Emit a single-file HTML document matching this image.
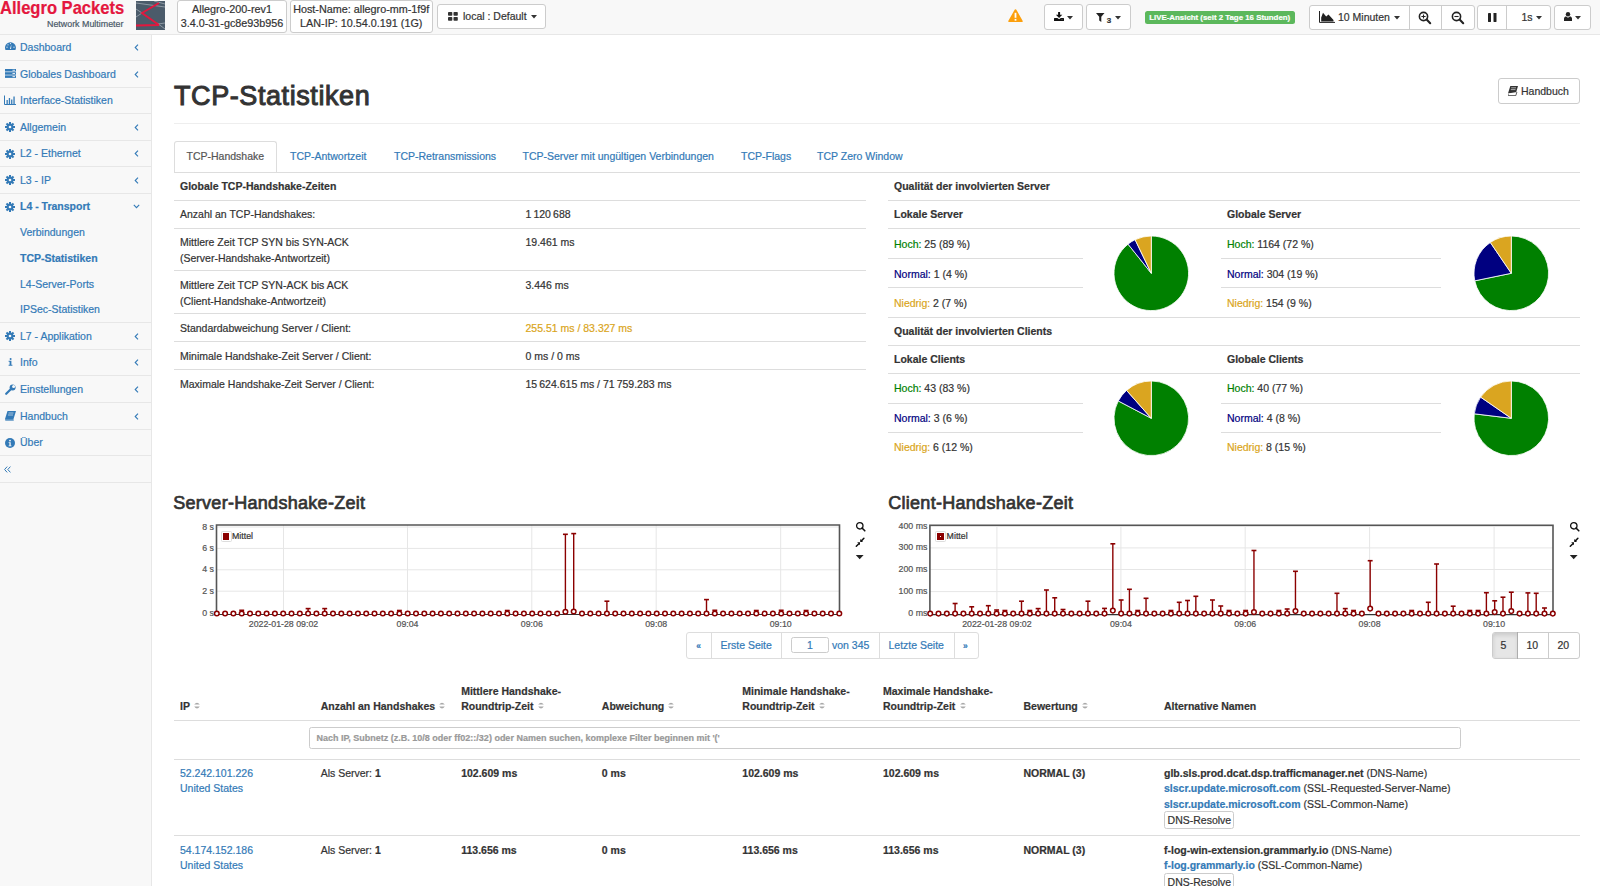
<!DOCTYPE html><html><head><meta charset="utf-8"><title>TCP-Statistiken</title><style>
*{box-sizing:border-box}
html,body{margin:0;padding:0}
body{width:1600px;height:886px;overflow:hidden;position:relative;background:#fff;font-family:"Liberation Sans",sans-serif;font-size:10.5px;line-height:15px;color:#333;-webkit-text-stroke:0.2px}
.a{position:absolute}
a{color:#337ab7;text-decoration:none}
svg{display:block}
#hdr{left:0;top:0;width:1600px;height:35px;background:#f8f8f8;border-bottom:1px solid #e7e7e7}
.hbox{background:#fff;border:1px solid #ccc;border-radius:3px;text-align:center;white-space:nowrap;line-height:14px;font-size:10.8px}
.btn{background:#fff;border:1px solid #ccc;border-radius:3px;white-space:nowrap;color:#333}
#side{left:0;top:35px;width:152px;height:851px;background:#f8f8f8;border-right:1px solid #e7e7e7}
#side ul{list-style:none;margin:0;padding:0}
#side li.it{border-bottom:1px solid #e7e7e7;height:26.67px;position:relative}
#side li.it>a{position:absolute;left:20px;top:0;line-height:25.67px;white-space:nowrap}
#side .ic{position:absolute;left:5px;top:7px}
#side .ch{position:absolute;left:134px;top:9px}
#side .sub{position:absolute;left:20px;white-space:nowrap}
.tbl{border-collapse:separate;border-spacing:0;width:100%}
.tbl td,.tbl th{padding:6px;vertical-align:top;text-align:left;border-top:1px solid #ddd;line-height:15px}
.tbl tr:first-child>td,.tbl tr:first-child>th{border-top:0}
b,th{font-weight:700}
.hoch{color:#008000}.normal{color:#000080}.niedrig{color:#daa520}
</style></head><body><div id="hdr" class="a"></div><div class="a" style="left:-0.5px;top:-2px;font-size:17.9px;font-weight:700;color:#e4173e;line-height:20px;white-space:nowrap;transform:scaleX(0.925);transform-origin:0 0">Allegro Packets</div><div class="a" style="left:47px;top:18px;font-size:8.9px;color:#4a5968;line-height:12px;white-space:nowrap">Network Multimeter</div><svg class="a" style="left:136px;top:1px" width="30" height="29" viewBox="0 0 30 29">
<rect x="0" y="0" width="29" height="29" fill="#4b5b6a"/>
<path d="M0 2 L29 6 M0 8 L6 12 L0 16 M21 22 L29 28 M22 23 L29 22 M18 0 L29 3" stroke="#a9b3bc" stroke-width="0.7" fill="none"/>
<path d="M23 2 L6 12 L23 24 M0 24.5 L23 24" stroke="#e4173e" stroke-width="1.9" fill="none"/>
</svg><div class="a hbox" style="left:177px;top:0px;width:110px;height:33px;padding-top:1px">Allegro-200-rev1<br>3.4.0-31-gc8e93b956</div><div class="a hbox" style="left:289.5px;top:0px;width:143.5px;height:33px;padding-top:1px">Host-Name: allegro-mm-1f9f<br>LAN-IP: 10.54.0.191 (1G)</div><div class="a btn" style="left:436.5px;top:3.5px;width:109.5px;height:25.75px"></div><svg class="a" style="left:448px;top:12px" width="10" height="9" viewBox="0 0 10 9"><rect x="0" y="0" width="4.3" height="3.8" rx="0.8" fill="#333"/><rect x="5.5" y="0" width="4.3" height="3.8" rx="0.8" fill="#333"/><rect x="0" y="5" width="4.3" height="3.8" rx="0.8" fill="#333"/><rect x="5.5" y="5" width="4.3" height="3.8" rx="0.8" fill="#333"/></svg><div class="a" style="left:463px;top:9px;white-space:nowrap">local : Default</div><svg class="a" style="left:530.5px;top:15px" width="6.0" height="3.5" viewBox="0 0 6 3.5"><path d="M0 0 L6 0 L3 3.5Z" fill="#333"/></svg><svg class="a" style="left:1008px;top:8.5px" width="15" height="13.5" viewBox="0 0 15 13.5"><path d="M7.5 0.3 C8 0.3 8.3 0.6 8.5 1 L14.6 11.8 C14.9 12.4 14.6 13.2 13.8 13.2 L1.2 13.2 C0.4 13.2 0.1 12.4 0.4 11.8 L6.5 1 C6.7 0.6 7 0.3 7.5 0.3Z" fill="#fc9f0c"/><rect x="6.6" y="3.8" width="1.8" height="5" fill="#fff"/><rect x="6.6" y="9.9" width="1.8" height="1.8" fill="#fff"/></svg><div class="a btn" style="left:1044px;top:4px;width:38.5px;height:25.5px"></div><svg class="a" style="left:1054px;top:11.9px" width="10" height="9" viewBox="0 0 10 9"><rect x="4.1" y="0" width="2" height="3" rx="0.3" fill="#111"/><path d="M1.9 2.7 H8.3 L5.1 5.9Z" fill="#111"/><path d="M0 6.5 Q0 5.9 0.6 5.9 H3.4 L5.1 7.3 L6.8 5.9 H9.4 Q10 5.9 10 6.5 V8.4 Q10 8.9 9.5 8.9 H0.5 Q0 8.9 0 8.4Z" fill="#111"/><rect x="7.6" y="7.2" width="0.8" height="0.8" fill="#888"/></svg><svg class="a" style="left:1067px;top:16px" width="6.0" height="3.5" viewBox="0 0 6 3.5"><path d="M0 0 L6 0 L3 3.5Z" fill="#333"/></svg><div class="a btn" style="left:1086px;top:4px;width:45px;height:25.5px"></div><svg class="a" style="left:1096px;top:12.5px" width="8.5" height="9" viewBox="0 0 8.5 9"><path d="M0 0 H8.5 L5.3 3.8 V9 L3.2 7.6 V3.8Z" fill="#222"/></svg><div class="a" style="left:1106.8px;top:14.5px;font-size:8px;line-height:12px;font-weight:700;color:#333">3</div><svg class="a" style="left:1114.5px;top:16px" width="6.0" height="3.5" viewBox="0 0 6 3.5"><path d="M0 0 L6 0 L3 3.5Z" fill="#333"/></svg><div class="a" style="left:1144.5px;top:10.5px;width:150.5px;height:13.75px;background:#5cb85c;border-radius:2.5px;color:#fff;font-weight:700;font-size:7.875px;line-height:13.75px;text-align:center;white-space:nowrap">LIVE-Ansicht (seit 2 Tage 16 Stunden)</div><div class="a btn" style="left:1309px;top:4.5px;width:165.5px;height:25px"></div><div class="a" style="left:1408.5px;top:4.5px;width:1px;height:25px;background:#ccc"></div><div class="a" style="left:1441px;top:4.5px;width:1px;height:25px;background:#ccc"></div><svg class="a" style="left:1319px;top:11.2px" width="16" height="12" viewBox="0 0 16 12"><path d="M0.5 0 V11.4 H16" stroke="#222" stroke-width="1" fill="none"/><path d="M2.2 10.5 V6.5 L4 1.8 L7.2 5.5 L9.5 3.6 L14.5 9 V10.5Z" fill="#222"/></svg><div class="a" style="left:1338px;top:9.5px;white-space:nowrap">10 Minuten</div><svg class="a" style="left:1394px;top:16px" width="6.0" height="3.5" viewBox="0 0 6 3.5"><path d="M0 0 L6 0 L3 3.5Z" fill="#333"/></svg><svg class="a" style="left:1417.8px;top:11.4px" width="14" height="14" viewBox="0 0 14 14"><circle cx="5.5" cy="5.5" r="4.1" stroke="#222" stroke-width="1.6" fill="none"/><path d="M8.6 8.6 L12.2 12.2" stroke="#222" stroke-width="2.1" stroke-linecap="round"/><path d="M3.4 5.5 H7.6 M5.5 3.4 V7.6" stroke="#222" stroke-width="1.1"/></svg><svg class="a" style="left:1450.7px;top:11.4px" width="14" height="14" viewBox="0 0 14 14"><circle cx="5.5" cy="5.5" r="4.1" stroke="#222" stroke-width="1.6" fill="none"/><path d="M8.6 8.6 L12.2 12.2" stroke="#222" stroke-width="2.1" stroke-linecap="round"/><path d="M3.4 5.5 H7.6" stroke="#222" stroke-width="1.1"/></svg><div class="a btn" style="left:1477px;top:4.5px;width:74px;height:25px"></div><div class="a" style="left:1506px;top:4.5px;width:1px;height:25px;background:#ccc"></div><svg class="a" style="left:1488px;top:12.5px" width="9" height="9" viewBox="0 0 9 9"><rect x="0" y="0" width="3" height="9" rx="0.4" fill="#222"/><rect x="5.5" y="0" width="3" height="9" rx="0.4" fill="#222"/></svg><div class="a" style="left:1521.5px;top:9.5px;white-space:nowrap">1s</div><svg class="a" style="left:1535.5px;top:16px" width="6.0" height="3.5" viewBox="0 0 6 3.5"><path d="M0 0 L6 0 L3 3.5Z" fill="#333"/></svg><div class="a btn" style="left:1554px;top:4.5px;width:36.5px;height:25px"></div><svg class="a" style="left:1564px;top:12px" width="8" height="9" viewBox="0 0 8 9"><circle cx="4" cy="2.2" r="2.2" fill="#222"/><path d="M0 9 V6.5 C0 5 1.2 4.4 2.2 4.4 L4 5.8 L5.8 4.4 C6.8 4.4 8 5 8 6.5 V9Z" fill="#222"/></svg><svg class="a" style="left:1575px;top:16px" width="6.0" height="3.5" viewBox="0 0 6 3.5"><path d="M0 0 L6 0 L3 3.5Z" fill="#333"/></svg><div id="side" class="a"></div><div class="a" style="left:0;top:60.00px;width:151px;height:1px;background:#e7e7e7"></div><svg class="a" style="left:5px;top:41.5px" width="11" height="9" viewBox="0 0 11 9"><path d="M0.49 8 A5.45 5.45 0 1 1 10.41 8Z" fill="#337ab7"/><path d="M5 7 L6.3 2.2 L6.1 7Z" fill="#f8f8f8"/><circle cx="2" cy="5.2" r="0.6" fill="#f8f8f8"/><circle cx="3" cy="2.8" r="0.6" fill="#f8f8f8"/><circle cx="5.5" cy="1.6" r="0.6" fill="#f8f8f8"/><circle cx="9" cy="5.2" r="0.6" fill="#f8f8f8"/></svg><div class="a" style="left:20px;top:40.00px;white-space:nowrap;color:#337ab7;">Dashboard</div><svg class="a" style="left:134.2px;top:44.0px" width="5" height="7" viewBox="0 0 5 7"><path d="M4 0.6 L1.2 3.5 L4 6.4" stroke="#337ab7" stroke-width="1.1" fill="none"/></svg><div class="a" style="left:0;top:87.00px;width:151px;height:1px;background:#e7e7e7"></div><svg class="a" style="left:5px;top:69.0px" width="11" height="9" viewBox="0 0 11 9"><rect x="0" y="0" width="11" height="2.5" fill="#337ab7"/><rect x="0" y="3.2" width="11" height="2.5" fill="#337ab7"/><rect x="0" y="6.4" width="11" height="2.5" fill="#337ab7"/><rect x="7.5" y="0.8" width="2.5" height="0.9" fill="#f8f8f8"/><rect x="7.5" y="4" width="2.5" height="0.9" fill="#f8f8f8"/><rect x="7.5" y="7.2" width="2.5" height="0.9" fill="#f8f8f8"/></svg><div class="a" style="left:20px;top:66.50px;white-space:nowrap;color:#337ab7;">Globales Dashboard</div><svg class="a" style="left:134.2px;top:70.5px" width="5" height="7" viewBox="0 0 5 7"><path d="M4 0.6 L1.2 3.5 L4 6.4" stroke="#337ab7" stroke-width="1.1" fill="none"/></svg><div class="a" style="left:0;top:113.00px;width:151px;height:1px;background:#e7e7e7"></div><svg class="a" style="left:4.3px;top:95.0px" width="12" height="10" viewBox="0 0 12 10"><path d="M0.5 0.5 V9.5 H12" stroke="#337ab7" stroke-width="1" fill="none"/><rect x="2.5" y="5" width="1.3" height="4" fill="#337ab7"/><rect x="4.8" y="3" width="1.3" height="6" fill="#337ab7"/><rect x="7.1" y="4.5" width="1.3" height="4.5" fill="#337ab7"/><rect x="9.4" y="1.5" width="1.3" height="7.5" fill="#337ab7"/></svg><div class="a" style="left:20px;top:93.00px;white-space:nowrap;color:#337ab7;">Interface-Statistiken</div><div class="a" style="left:0;top:140.00px;width:151px;height:1px;background:#e7e7e7"></div><svg class="a" style="left:5px;top:122.0px" width="10" height="10" viewBox="0 0 10 10"><rect x="4" y="0" width="2" height="2.6" transform="rotate(0 5 5)" fill="#337ab7"/><rect x="4" y="0" width="2" height="2.6" transform="rotate(45 5 5)" fill="#337ab7"/><rect x="4" y="0" width="2" height="2.6" transform="rotate(90 5 5)" fill="#337ab7"/><rect x="4" y="0" width="2" height="2.6" transform="rotate(135 5 5)" fill="#337ab7"/><rect x="4" y="0" width="2" height="2.6" transform="rotate(180 5 5)" fill="#337ab7"/><rect x="4" y="0" width="2" height="2.6" transform="rotate(225 5 5)" fill="#337ab7"/><rect x="4" y="0" width="2" height="2.6" transform="rotate(270 5 5)" fill="#337ab7"/><rect x="4" y="0" width="2" height="2.6" transform="rotate(315 5 5)" fill="#337ab7"/><circle cx="5" cy="5" r="3.4" fill="#337ab7"/><circle cx="5" cy="5" r="1.3" fill="#f8f8f8"/></svg><div class="a" style="left:20px;top:119.50px;white-space:nowrap;color:#337ab7;">Allgemein</div><svg class="a" style="left:134.2px;top:123.5px" width="5" height="7" viewBox="0 0 5 7"><path d="M4 0.6 L1.2 3.5 L4 6.4" stroke="#337ab7" stroke-width="1.1" fill="none"/></svg><div class="a" style="left:0;top:166.00px;width:151px;height:1px;background:#e7e7e7"></div><svg class="a" style="left:5px;top:148.5px" width="10" height="10" viewBox="0 0 10 10"><rect x="4" y="0" width="2" height="2.6" transform="rotate(0 5 5)" fill="#337ab7"/><rect x="4" y="0" width="2" height="2.6" transform="rotate(45 5 5)" fill="#337ab7"/><rect x="4" y="0" width="2" height="2.6" transform="rotate(90 5 5)" fill="#337ab7"/><rect x="4" y="0" width="2" height="2.6" transform="rotate(135 5 5)" fill="#337ab7"/><rect x="4" y="0" width="2" height="2.6" transform="rotate(180 5 5)" fill="#337ab7"/><rect x="4" y="0" width="2" height="2.6" transform="rotate(225 5 5)" fill="#337ab7"/><rect x="4" y="0" width="2" height="2.6" transform="rotate(270 5 5)" fill="#337ab7"/><rect x="4" y="0" width="2" height="2.6" transform="rotate(315 5 5)" fill="#337ab7"/><circle cx="5" cy="5" r="3.4" fill="#337ab7"/><circle cx="5" cy="5" r="1.3" fill="#f8f8f8"/></svg><div class="a" style="left:20px;top:146.00px;white-space:nowrap;color:#337ab7;">L2 - Ethernet</div><svg class="a" style="left:134.2px;top:150.0px" width="5" height="7" viewBox="0 0 5 7"><path d="M4 0.6 L1.2 3.5 L4 6.4" stroke="#337ab7" stroke-width="1.1" fill="none"/></svg><div class="a" style="left:0;top:193.00px;width:151px;height:1px;background:#e7e7e7"></div><svg class="a" style="left:5px;top:175.0px" width="10" height="10" viewBox="0 0 10 10"><rect x="4" y="0" width="2" height="2.6" transform="rotate(0 5 5)" fill="#337ab7"/><rect x="4" y="0" width="2" height="2.6" transform="rotate(45 5 5)" fill="#337ab7"/><rect x="4" y="0" width="2" height="2.6" transform="rotate(90 5 5)" fill="#337ab7"/><rect x="4" y="0" width="2" height="2.6" transform="rotate(135 5 5)" fill="#337ab7"/><rect x="4" y="0" width="2" height="2.6" transform="rotate(180 5 5)" fill="#337ab7"/><rect x="4" y="0" width="2" height="2.6" transform="rotate(225 5 5)" fill="#337ab7"/><rect x="4" y="0" width="2" height="2.6" transform="rotate(270 5 5)" fill="#337ab7"/><rect x="4" y="0" width="2" height="2.6" transform="rotate(315 5 5)" fill="#337ab7"/><circle cx="5" cy="5" r="3.4" fill="#337ab7"/><circle cx="5" cy="5" r="1.3" fill="#f8f8f8"/></svg><div class="a" style="left:20px;top:172.50px;white-space:nowrap;color:#337ab7;">L3 - IP</div><svg class="a" style="left:134.2px;top:176.5px" width="5" height="7" viewBox="0 0 5 7"><path d="M4 0.6 L1.2 3.5 L4 6.4" stroke="#337ab7" stroke-width="1.1" fill="none"/></svg><svg class="a" style="left:5px;top:201.84px" width="10" height="10" viewBox="0 0 10 10"><rect x="4" y="0" width="2" height="2.6" transform="rotate(0 5 5)" fill="#337ab7"/><rect x="4" y="0" width="2" height="2.6" transform="rotate(45 5 5)" fill="#337ab7"/><rect x="4" y="0" width="2" height="2.6" transform="rotate(90 5 5)" fill="#337ab7"/><rect x="4" y="0" width="2" height="2.6" transform="rotate(135 5 5)" fill="#337ab7"/><rect x="4" y="0" width="2" height="2.6" transform="rotate(180 5 5)" fill="#337ab7"/><rect x="4" y="0" width="2" height="2.6" transform="rotate(225 5 5)" fill="#337ab7"/><rect x="4" y="0" width="2" height="2.6" transform="rotate(270 5 5)" fill="#337ab7"/><rect x="4" y="0" width="2" height="2.6" transform="rotate(315 5 5)" fill="#337ab7"/><circle cx="5" cy="5" r="3.4" fill="#337ab7"/><circle cx="5" cy="5" r="1.3" fill="#f8f8f8"/></svg><div class="a" style="left:20px;top:199.34px;white-space:nowrap;color:#337ab7;font-weight:700">L4 - Transport</div><svg class="a" style="left:133.2px;top:204.34px" width="7" height="5" viewBox="0 0 7 5"><path d="M0.8 0.8 L3.5 3.6 L6.2 0.8" stroke="#337ab7" stroke-width="1.1" fill="none"/></svg><div class="a" style="left:20px;top:224.70px;white-space:nowrap;color:#337ab7;">Verbindungen</div><div class="a" style="left:20px;top:250.70px;white-space:nowrap;color:#337ab7;font-weight:700;">TCP-Statistiken</div><div class="a" style="left:20px;top:276.50px;white-space:nowrap;color:#337ab7;">L4-Server-Ports</div><div class="a" style="left:20px;top:301.80px;white-space:nowrap;color:#337ab7;">IPSec-Statistiken</div><div class="a" style="left:0;top:322px;width:151px;height:1px;background:#e7e7e7"></div><div class="a" style="left:0;top:349.00px;width:151px;height:1px;background:#e7e7e7"></div><svg class="a" style="left:5px;top:331.0px" width="10" height="10" viewBox="0 0 10 10"><rect x="4" y="0" width="2" height="2.6" transform="rotate(0 5 5)" fill="#337ab7"/><rect x="4" y="0" width="2" height="2.6" transform="rotate(45 5 5)" fill="#337ab7"/><rect x="4" y="0" width="2" height="2.6" transform="rotate(90 5 5)" fill="#337ab7"/><rect x="4" y="0" width="2" height="2.6" transform="rotate(135 5 5)" fill="#337ab7"/><rect x="4" y="0" width="2" height="2.6" transform="rotate(180 5 5)" fill="#337ab7"/><rect x="4" y="0" width="2" height="2.6" transform="rotate(225 5 5)" fill="#337ab7"/><rect x="4" y="0" width="2" height="2.6" transform="rotate(270 5 5)" fill="#337ab7"/><rect x="4" y="0" width="2" height="2.6" transform="rotate(315 5 5)" fill="#337ab7"/><circle cx="5" cy="5" r="3.4" fill="#337ab7"/><circle cx="5" cy="5" r="1.3" fill="#f8f8f8"/></svg><div class="a" style="left:20px;top:328.50px;white-space:nowrap;color:#337ab7;">L7 - Applikation</div><svg class="a" style="left:134.2px;top:332.5px" width="5" height="7" viewBox="0 0 5 7"><path d="M4 0.6 L1.2 3.5 L4 6.4" stroke="#337ab7" stroke-width="1.1" fill="none"/></svg><div class="a" style="left:0;top:375.00px;width:151px;height:1px;background:#e7e7e7"></div><svg class="a" style="left:8.3px;top:358.1px" width="5" height="8" viewBox="0 0 5 8"><circle cx="2.6" cy="1" r="1" fill="#337ab7"/><path d="M0.6 2.7 H3.4 V6.7 H4.4 V7.8 H0.6 V6.7 H1.6 V3.8 H0.6Z" fill="#337ab7"/></svg><div class="a" style="left:20px;top:355.00px;white-space:nowrap;color:#337ab7;">Info</div><svg class="a" style="left:134.2px;top:359.0px" width="5" height="7" viewBox="0 0 5 7"><path d="M4 0.6 L1.2 3.5 L4 6.4" stroke="#337ab7" stroke-width="1.1" fill="none"/></svg><div class="a" style="left:0;top:402.00px;width:151px;height:1px;background:#e7e7e7"></div><svg class="a" style="left:5px;top:384.0px" width="11" height="11" viewBox="0 0 11 11"><path d="M1.2 9.8 L6 5" stroke="#337ab7" stroke-width="2.2" stroke-linecap="round"/><circle cx="7.6" cy="3.4" r="3" fill="#337ab7"/><circle cx="8.6" cy="2.4" r="1.5" fill="#f8f8f8"/></svg><div class="a" style="left:20px;top:381.50px;white-space:nowrap;color:#337ab7;">Einstellungen</div><svg class="a" style="left:134.2px;top:385.5px" width="5" height="7" viewBox="0 0 5 7"><path d="M4 0.6 L1.2 3.5 L4 6.4" stroke="#337ab7" stroke-width="1.1" fill="none"/></svg><div class="a" style="left:0;top:429.00px;width:151px;height:1px;background:#e7e7e7"></div><svg class="a" style="left:5px;top:411.0px" width="11" height="10" viewBox="0 0 11 10"><path d="M2.5 0 H11 L8.5 8 H0Z" fill="#337ab7"/><path d="M0 8 L0.3 9.8 H8.8 L8.5 8" fill="#337ab7" opacity="0.8"/><path d="M3.5 2 H8.5 M3 4 H8" stroke="#f8f8f8" stroke-width="0.6"/></svg><div class="a" style="left:20px;top:408.50px;white-space:nowrap;color:#337ab7;">Handbuch</div><svg class="a" style="left:134.2px;top:412.5px" width="5" height="7" viewBox="0 0 5 7"><path d="M4 0.6 L1.2 3.5 L4 6.4" stroke="#337ab7" stroke-width="1.1" fill="none"/></svg><div class="a" style="left:0;top:455.00px;width:151px;height:1px;background:#e7e7e7"></div><svg class="a" style="left:5px;top:437.5px" width="10" height="10" viewBox="0 0 10 10"><circle cx="5" cy="5" r="5" fill="#337ab7"/><circle cx="5" cy="2.6" r="0.9" fill="#f8f8f8"/><path d="M3.6 4.2 H5.7 V7.4 H6.5 V8.2 H3.6 V7.4 H4.4 V5 H3.6Z" fill="#f8f8f8"/></svg><div class="a" style="left:20px;top:435.00px;white-space:nowrap;color:#337ab7;">Über</div><svg class="a" style="left:4px;top:465.50px" width="7" height="7" viewBox="0 0 7 7"><path d="M3.2 0.6 L0.6 3.5 L3.2 6.4 M6.4 0.6 L3.8 3.5 L6.4 6.4" stroke="#337ab7" stroke-width="1" fill="none"/></svg><div class="a" style="left:0;top:482.00px;width:151px;height:1px;background:#e7e7e7"></div><div class="a" style="left:174px;top:75.5px;font-size:27px;line-height:40px;font-weight:400;-webkit-text-stroke:1px #333;letter-spacing:0.58px;white-space:nowrap">TCP-Statistiken</div><div class="a" style="left:174px;top:123px;width:1406px;height:1px;background:#eee"></div><div class="a btn" style="left:1498px;top:78px;width:82px;height:25.5px"></div><svg class="a" style="left:1508px;top:86px" width="10" height="10" viewBox="0 0 10 10"><path d="M2.3 0 H10 L7.8 7.6 H0Z" fill="#333"/><path d="M0 7.6 L0.2 9.6 H7.8 L8.9 6" stroke="#333" stroke-width="0.8" fill="#fff"/><path d="M3.2 1.8 H8 M2.8 3.6 H7.5" stroke="#fff" stroke-width="0.6"/></svg><div class="a" style="left:1521px;top:83.5px;white-space:nowrap">Handbuch</div><div class="a" style="left:174px;top:140.5px;width:102.5px;height:32px;border:1px solid #ddd;border-bottom:0;border-radius:3px 3px 0 0;background:#fff"></div><div class="a" style="left:174px;top:171.5px;width:1406px;height:1px;background:#ddd"></div><div class="a" style="left:186.5px;top:148.5px;white-space:nowrap;color:#555">TCP-Handshake</div><div class="a" style="left:290px;top:148.5px;white-space:nowrap;color:#337ab7">TCP-Antwortzeit</div><div class="a" style="left:394px;top:148.5px;white-space:nowrap;color:#337ab7">TCP-Retransmissions</div><div class="a" style="left:522.5px;top:148.5px;white-space:nowrap;color:#337ab7">TCP-Server mit ungültigen Verbindungen</div><div class="a" style="left:741px;top:148.5px;white-space:nowrap;color:#337ab7">TCP-Flags</div><div class="a" style="left:817px;top:148.5px;white-space:nowrap;color:#337ab7">TCP Zero Window</div><div class="a" style="left:174px;top:172.5px;width:692px"><table class="tbl"><tr><th colspan="2">Globale TCP-Handshake-Zeiten</th></tr><tr><td style="width:345.5px;">Anzahl an TCP-Handshakes:</td><td style="">1&#8201;120&#8201;688</td></tr><tr><td style="width:345.5px;padding-top:6.5px;padding-bottom:4.3px;line-height:15.6px;">Mittlere Zeit TCP SYN bis SYN-ACK<br>(Server-Handshake-Antwortzeit)</td><td style="padding-top:6.5px;padding-bottom:4.3px;line-height:15.6px;">19.461 ms</td></tr><tr><td style="width:345.5px;padding-top:6.5px;padding-bottom:4.3px;line-height:15.6px;">Mittlere Zeit TCP SYN-ACK bis ACK<br>(Client-Handshake-Antwortzeit)</td><td style="padding-top:6.5px;padding-bottom:4.3px;line-height:15.6px;">3.446 ms</td></tr><tr><td style="width:345.5px;padding-top:7px;padding-bottom:5px;">Standardabweichung Server / Client:</td><td style="padding-top:7px;padding-bottom:5px;"><span style="color:#daa520">255.51 ms / 83.327 ms</span></td></tr><tr><td style="width:345.5px;padding-top:7px;padding-bottom:5px;">Minimale Handshake-Zeit Server / Client:</td><td style="padding-top:7px;padding-bottom:5px;">0 ms / 0 ms</td></tr><tr><td style="width:345.5px;padding-top:7px;padding-bottom:5px;">Maximale Handshake-Zeit Server / Client:</td><td style="padding-top:7px;padding-bottom:5px;">15&#8201;624.615 ms / 71&#8201;759.283 ms</td></tr></table></div><div class="a" style="left:894px;top:178.50px;font-weight:700;white-space:nowrap">Qualität der involvierten Server</div><div class="a" style="left:888px;top:199.50px;width:692px;height:1px;background:#ddd"></div><div class="a" style="left:894px;top:206.50px;font-weight:700;white-space:nowrap">Lokale Server</div><div class="a" style="left:1227px;top:206.50px;font-weight:700;white-space:nowrap">Globale Server</div><div class="a" style="left:888px;top:227.50px;width:692px;height:1px;background:#ddd"></div><div class="a" style="left:894px;top:237.00px;white-space:nowrap"><span class="hoch">Hoch:</span> 25 (89 %)</div><div class="a" style="left:888px;top:257.90px;width:194.5px;height:1px;background:#ddd"></div><div class="a" style="left:894px;top:266.50px;white-space:nowrap"><span class="normal">Normal:</span> 1 (4 %)</div><div class="a" style="left:888px;top:286.90px;width:194.5px;height:1px;background:#ddd"></div><div class="a" style="left:894px;top:295.60px;white-space:nowrap"><span class="niedrig">Niedrig:</span> 2 (7 %)</div><div class="a" style="left:1227px;top:237.00px;white-space:nowrap"><span class="hoch">Hoch:</span> 1164 (72 %)</div><div class="a" style="left:1221px;top:257.90px;width:220px;height:1px;background:#ddd"></div><div class="a" style="left:1227px;top:266.50px;white-space:nowrap"><span class="normal">Normal:</span> 304 (19 %)</div><div class="a" style="left:1221px;top:286.90px;width:220px;height:1px;background:#ddd"></div><div class="a" style="left:1227px;top:295.60px;white-space:nowrap"><span class="niedrig">Niedrig:</span> 154 (9 %)</div><svg class="a" style="left:1113.00px;top:234.50px" width="76.6" height="76.6" viewBox="-38.3 -38.3 76.6 76.6"><path d="M0 0 L0.000 -37.300 A37.3 37.3 0 1 1 -23.256 -29.162Z" fill="#008000" stroke="#fff" stroke-width="0.8" stroke-linejoin="round"/><path d="M0 0 L-23.256 -29.162 A37.3 37.3 0 0 1 -16.184 -33.606Z" fill="#000080" stroke="#fff" stroke-width="0.8" stroke-linejoin="round"/><path d="M0 0 L-16.184 -33.606 A37.3 37.3 0 0 1 -0.000 -37.300Z" fill="#daa520" stroke="#fff" stroke-width="0.8" stroke-linejoin="round"/></svg><svg class="a" style="left:1472.50px;top:234.50px" width="76.6" height="76.6" viewBox="-38.3 -38.3 76.6 76.6"><path d="M0 0 L0.000 -37.300 A37.3 37.3 0 1 1 -36.531 7.534Z" fill="#008000" stroke="#fff" stroke-width="0.8" stroke-linejoin="round"/><path d="M0 0 L-36.531 7.534 A37.3 37.3 0 0 1 -20.955 -30.857Z" fill="#000080" stroke="#fff" stroke-width="0.8" stroke-linejoin="round"/><path d="M0 0 L-20.955 -30.857 A37.3 37.3 0 0 1 -0.000 -37.300Z" fill="#daa520" stroke="#fff" stroke-width="0.8" stroke-linejoin="round"/></svg><div class="a" style="left:888px;top:316.70px;width:692px;height:1px;background:#ddd"></div><div class="a" style="left:894px;top:323.70px;font-weight:700;white-space:nowrap">Qualität der involvierten Clients</div><div class="a" style="left:888px;top:344.70px;width:692px;height:1px;background:#ddd"></div><div class="a" style="left:894px;top:351.70px;font-weight:700;white-space:nowrap">Lokale Clients</div><div class="a" style="left:1227px;top:351.70px;font-weight:700;white-space:nowrap">Globale Clients</div><div class="a" style="left:888px;top:372.70px;width:692px;height:1px;background:#ddd"></div><div class="a" style="left:894px;top:381.30px;white-space:nowrap"><span class="hoch">Hoch:</span> 43 (83 %)</div><div class="a" style="left:888px;top:403.10px;width:194.5px;height:1px;background:#ddd"></div><div class="a" style="left:894px;top:411.10px;white-space:nowrap"><span class="normal">Normal:</span> 3 (6 %)</div><div class="a" style="left:888px;top:432.10px;width:194.5px;height:1px;background:#ddd"></div><div class="a" style="left:894px;top:440.20px;white-space:nowrap"><span class="niedrig">Niedrig:</span> 6 (12 %)</div><div class="a" style="left:1227px;top:381.30px;white-space:nowrap"><span class="hoch">Hoch:</span> 40 (77 %)</div><div class="a" style="left:1221px;top:403.10px;width:220px;height:1px;background:#ddd"></div><div class="a" style="left:1227px;top:411.10px;white-space:nowrap"><span class="normal">Normal:</span> 4 (8 %)</div><div class="a" style="left:1221px;top:432.10px;width:220px;height:1px;background:#ddd"></div><div class="a" style="left:1227px;top:440.20px;white-space:nowrap"><span class="niedrig">Niedrig:</span> 8 (15 %)</div><svg class="a" style="left:1113.00px;top:379.70px" width="76.6" height="76.6" viewBox="-38.3 -38.3 76.6 76.6"><path d="M0 0 L0.000 -37.300 A37.3 37.3 0 1 1 -33.028 -17.334Z" fill="#008000" stroke="#fff" stroke-width="0.8" stroke-linejoin="round"/><path d="M0 0 L-33.028 -17.334 A37.3 37.3 0 0 1 -24.734 -27.919Z" fill="#000080" stroke="#fff" stroke-width="0.8" stroke-linejoin="round"/><path d="M0 0 L-24.734 -27.919 A37.3 37.3 0 0 1 -0.000 -37.300Z" fill="#daa520" stroke="#fff" stroke-width="0.8" stroke-linejoin="round"/></svg><svg class="a" style="left:1472.50px;top:379.70px" width="76.6" height="76.6" viewBox="-38.3 -38.3 76.6 76.6"><path d="M0 0 L0.000 -37.300 A37.3 37.3 0 1 1 -37.028 -4.496Z" fill="#008000" stroke="#fff" stroke-width="0.8" stroke-linejoin="round"/><path d="M0 0 L-37.028 -4.496 A37.3 37.3 0 0 1 -30.697 -21.189Z" fill="#000080" stroke="#fff" stroke-width="0.8" stroke-linejoin="round"/><path d="M0 0 L-30.697 -21.189 A37.3 37.3 0 0 1 -0.000 -37.300Z" fill="#daa520" stroke="#fff" stroke-width="0.8" stroke-linejoin="round"/></svg><div class="a" style="left:173.2px;top:490px;font-size:18px;line-height:27px;font-weight:400;-webkit-text-stroke:0.7px #333;letter-spacing:0.29px;white-space:nowrap">Server-Handshake-Zeit</div><svg class="a" style="left:0;top:0" width="1600" height="886" viewBox="0 0 1600 886"><line x1="216.5" y1="591.2" x2="839.5" y2="591.2" stroke="#e6e6e6" stroke-width="1"/><line x1="216.5" y1="569.8" x2="839.5" y2="569.8" stroke="#e6e6e6" stroke-width="1"/><line x1="216.5" y1="548.4" x2="839.5" y2="548.4" stroke="#e6e6e6" stroke-width="1"/><line x1="216.5" y1="527" x2="839.5" y2="527" stroke="#e6e6e6" stroke-width="1"/><line x1="283.5" y1="525" x2="283.5" y2="613.5" stroke="#e6e6e6" stroke-width="1"/><line x1="407.5" y1="525" x2="407.5" y2="613.5" stroke="#e6e6e6" stroke-width="1"/><line x1="531.8" y1="525" x2="531.8" y2="613.5" stroke="#e6e6e6" stroke-width="1"/><line x1="656.2" y1="525" x2="656.2" y2="613.5" stroke="#e6e6e6" stroke-width="1"/><line x1="780.7" y1="525" x2="780.7" y2="613.5" stroke="#e6e6e6" stroke-width="1"/><path d="M216.5 613.5 V525 H839.5 V613.5" stroke="#555" stroke-width="1.6" fill="none"/><line x1="216.5" y1="614.5" x2="839.5" y2="614.5" stroke="#333" stroke-width="1.2"/><line x1="241.70" y1="610.3" x2="241.70" y2="613.5" stroke="#8b0000" stroke-width="1.4"/><line x1="239.25" y1="610.3" x2="244.15" y2="610.3" stroke="#8b0000" stroke-width="1.6"/><line x1="308.10" y1="608.6" x2="308.10" y2="613.5" stroke="#8b0000" stroke-width="1.4"/><line x1="305.65" y1="608.6" x2="310.55" y2="608.6" stroke="#8b0000" stroke-width="1.6"/><line x1="324.70" y1="608.6" x2="324.70" y2="613.5" stroke="#8b0000" stroke-width="1.4"/><line x1="322.25" y1="608.6" x2="327.15" y2="608.6" stroke="#8b0000" stroke-width="1.6"/><line x1="399.40" y1="610.5" x2="399.40" y2="613.5" stroke="#8b0000" stroke-width="1.4"/><line x1="396.95" y1="610.5" x2="401.85" y2="610.5" stroke="#8b0000" stroke-width="1.6"/><line x1="507.30" y1="610.5" x2="507.30" y2="613.5" stroke="#8b0000" stroke-width="1.4"/><line x1="504.85" y1="610.5" x2="509.75" y2="610.5" stroke="#8b0000" stroke-width="1.6"/><line x1="565.40" y1="534.3" x2="565.40" y2="611.7" stroke="#8b0000" stroke-width="1.4"/><line x1="562.95" y1="534.3" x2="567.85" y2="534.3" stroke="#8b0000" stroke-width="1.6"/><line x1="573.70" y1="533.6" x2="573.70" y2="611.5" stroke="#8b0000" stroke-width="1.4"/><line x1="571.25" y1="533.6" x2="576.15" y2="533.6" stroke="#8b0000" stroke-width="1.6"/><line x1="606.90" y1="601.2" x2="606.90" y2="613.5" stroke="#8b0000" stroke-width="1.4"/><line x1="604.45" y1="601.2" x2="609.35" y2="601.2" stroke="#8b0000" stroke-width="1.6"/><line x1="706.50" y1="599.6" x2="706.50" y2="613.5" stroke="#8b0000" stroke-width="1.4"/><line x1="704.05" y1="599.6" x2="708.95" y2="599.6" stroke="#8b0000" stroke-width="1.6"/><line x1="714.80" y1="610.3" x2="714.80" y2="613.5" stroke="#8b0000" stroke-width="1.4"/><line x1="712.35" y1="610.3" x2="717.25" y2="610.3" stroke="#8b0000" stroke-width="1.6"/><line x1="756.30" y1="610.5" x2="756.30" y2="613.5" stroke="#8b0000" stroke-width="1.4"/><line x1="753.85" y1="610.5" x2="758.75" y2="610.5" stroke="#8b0000" stroke-width="1.6"/><line x1="781.20" y1="610.3" x2="781.20" y2="613.5" stroke="#8b0000" stroke-width="1.4"/><line x1="778.75" y1="610.3" x2="783.65" y2="610.3" stroke="#8b0000" stroke-width="1.6"/><line x1="806.10" y1="610.5" x2="806.10" y2="613.5" stroke="#8b0000" stroke-width="1.4"/><line x1="803.65" y1="610.5" x2="808.55" y2="610.5" stroke="#8b0000" stroke-width="1.6"/><circle cx="216.80" cy="613.50" r="2.3" fill="#fff" stroke="#8b0000" stroke-width="1.5"/><circle cx="225.10" cy="613.50" r="2.3" fill="#fff" stroke="#8b0000" stroke-width="1.5"/><circle cx="233.40" cy="613.50" r="2.3" fill="#fff" stroke="#8b0000" stroke-width="1.5"/><circle cx="241.70" cy="613.50" r="2.3" fill="#fff" stroke="#8b0000" stroke-width="1.5"/><circle cx="250.00" cy="613.50" r="2.3" fill="#fff" stroke="#8b0000" stroke-width="1.5"/><circle cx="258.30" cy="613.50" r="2.3" fill="#fff" stroke="#8b0000" stroke-width="1.5"/><circle cx="266.60" cy="613.50" r="2.3" fill="#fff" stroke="#8b0000" stroke-width="1.5"/><circle cx="274.90" cy="613.50" r="2.3" fill="#fff" stroke="#8b0000" stroke-width="1.5"/><circle cx="283.20" cy="613.50" r="2.3" fill="#fff" stroke="#8b0000" stroke-width="1.5"/><circle cx="291.50" cy="613.50" r="2.3" fill="#fff" stroke="#8b0000" stroke-width="1.5"/><circle cx="299.80" cy="613.50" r="2.3" fill="#fff" stroke="#8b0000" stroke-width="1.5"/><circle cx="308.10" cy="613.50" r="2.3" fill="#fff" stroke="#8b0000" stroke-width="1.5"/><circle cx="316.40" cy="613.50" r="2.3" fill="#fff" stroke="#8b0000" stroke-width="1.5"/><circle cx="324.70" cy="613.50" r="2.3" fill="#fff" stroke="#8b0000" stroke-width="1.5"/><circle cx="333.00" cy="613.50" r="2.3" fill="#fff" stroke="#8b0000" stroke-width="1.5"/><circle cx="341.30" cy="613.50" r="2.3" fill="#fff" stroke="#8b0000" stroke-width="1.5"/><circle cx="349.60" cy="613.50" r="2.3" fill="#fff" stroke="#8b0000" stroke-width="1.5"/><circle cx="357.90" cy="613.50" r="2.3" fill="#fff" stroke="#8b0000" stroke-width="1.5"/><circle cx="366.20" cy="613.50" r="2.3" fill="#fff" stroke="#8b0000" stroke-width="1.5"/><circle cx="374.50" cy="613.50" r="2.3" fill="#fff" stroke="#8b0000" stroke-width="1.5"/><circle cx="382.80" cy="613.50" r="2.3" fill="#fff" stroke="#8b0000" stroke-width="1.5"/><circle cx="391.10" cy="613.50" r="2.3" fill="#fff" stroke="#8b0000" stroke-width="1.5"/><circle cx="399.40" cy="613.50" r="2.3" fill="#fff" stroke="#8b0000" stroke-width="1.5"/><circle cx="407.70" cy="613.50" r="2.3" fill="#fff" stroke="#8b0000" stroke-width="1.5"/><circle cx="416.00" cy="613.50" r="2.3" fill="#fff" stroke="#8b0000" stroke-width="1.5"/><circle cx="424.30" cy="613.50" r="2.3" fill="#fff" stroke="#8b0000" stroke-width="1.5"/><circle cx="432.60" cy="613.50" r="2.3" fill="#fff" stroke="#8b0000" stroke-width="1.5"/><circle cx="440.90" cy="613.50" r="2.3" fill="#fff" stroke="#8b0000" stroke-width="1.5"/><circle cx="449.20" cy="613.50" r="2.3" fill="#fff" stroke="#8b0000" stroke-width="1.5"/><circle cx="457.50" cy="613.50" r="2.3" fill="#fff" stroke="#8b0000" stroke-width="1.5"/><circle cx="465.80" cy="613.50" r="2.3" fill="#fff" stroke="#8b0000" stroke-width="1.5"/><circle cx="474.10" cy="613.50" r="2.3" fill="#fff" stroke="#8b0000" stroke-width="1.5"/><circle cx="482.40" cy="613.50" r="2.3" fill="#fff" stroke="#8b0000" stroke-width="1.5"/><circle cx="490.70" cy="613.50" r="2.3" fill="#fff" stroke="#8b0000" stroke-width="1.5"/><circle cx="499.00" cy="613.50" r="2.3" fill="#fff" stroke="#8b0000" stroke-width="1.5"/><circle cx="507.30" cy="613.50" r="2.3" fill="#fff" stroke="#8b0000" stroke-width="1.5"/><circle cx="515.60" cy="613.50" r="2.3" fill="#fff" stroke="#8b0000" stroke-width="1.5"/><circle cx="523.90" cy="613.50" r="2.3" fill="#fff" stroke="#8b0000" stroke-width="1.5"/><circle cx="532.20" cy="613.50" r="2.3" fill="#fff" stroke="#8b0000" stroke-width="1.5"/><circle cx="540.50" cy="613.50" r="2.3" fill="#fff" stroke="#8b0000" stroke-width="1.5"/><circle cx="548.80" cy="613.50" r="2.3" fill="#fff" stroke="#8b0000" stroke-width="1.5"/><circle cx="557.10" cy="613.50" r="2.3" fill="#fff" stroke="#8b0000" stroke-width="1.5"/><circle cx="565.40" cy="611.70" r="2.3" fill="#fff" stroke="#8b0000" stroke-width="1.5"/><circle cx="573.70" cy="611.50" r="2.3" fill="#fff" stroke="#8b0000" stroke-width="1.5"/><circle cx="582.00" cy="613.50" r="2.3" fill="#fff" stroke="#8b0000" stroke-width="1.5"/><circle cx="590.30" cy="613.50" r="2.3" fill="#fff" stroke="#8b0000" stroke-width="1.5"/><circle cx="598.60" cy="613.50" r="2.3" fill="#fff" stroke="#8b0000" stroke-width="1.5"/><circle cx="606.90" cy="613.50" r="2.3" fill="#fff" stroke="#8b0000" stroke-width="1.5"/><circle cx="615.20" cy="613.50" r="2.3" fill="#fff" stroke="#8b0000" stroke-width="1.5"/><circle cx="623.50" cy="613.50" r="2.3" fill="#fff" stroke="#8b0000" stroke-width="1.5"/><circle cx="631.80" cy="613.50" r="2.3" fill="#fff" stroke="#8b0000" stroke-width="1.5"/><circle cx="640.10" cy="613.50" r="2.3" fill="#fff" stroke="#8b0000" stroke-width="1.5"/><circle cx="648.40" cy="613.50" r="2.3" fill="#fff" stroke="#8b0000" stroke-width="1.5"/><circle cx="656.70" cy="613.50" r="2.3" fill="#fff" stroke="#8b0000" stroke-width="1.5"/><circle cx="665.00" cy="613.50" r="2.3" fill="#fff" stroke="#8b0000" stroke-width="1.5"/><circle cx="673.30" cy="613.50" r="2.3" fill="#fff" stroke="#8b0000" stroke-width="1.5"/><circle cx="681.60" cy="613.50" r="2.3" fill="#fff" stroke="#8b0000" stroke-width="1.5"/><circle cx="689.90" cy="613.50" r="2.3" fill="#fff" stroke="#8b0000" stroke-width="1.5"/><circle cx="698.20" cy="613.50" r="2.3" fill="#fff" stroke="#8b0000" stroke-width="1.5"/><circle cx="706.50" cy="613.50" r="2.3" fill="#fff" stroke="#8b0000" stroke-width="1.5"/><circle cx="714.80" cy="613.50" r="2.3" fill="#fff" stroke="#8b0000" stroke-width="1.5"/><circle cx="723.10" cy="613.50" r="2.3" fill="#fff" stroke="#8b0000" stroke-width="1.5"/><circle cx="731.40" cy="613.50" r="2.3" fill="#fff" stroke="#8b0000" stroke-width="1.5"/><circle cx="739.70" cy="613.50" r="2.3" fill="#fff" stroke="#8b0000" stroke-width="1.5"/><circle cx="748.00" cy="613.50" r="2.3" fill="#fff" stroke="#8b0000" stroke-width="1.5"/><circle cx="756.30" cy="613.50" r="2.3" fill="#fff" stroke="#8b0000" stroke-width="1.5"/><circle cx="764.60" cy="613.50" r="2.3" fill="#fff" stroke="#8b0000" stroke-width="1.5"/><circle cx="772.90" cy="613.50" r="2.3" fill="#fff" stroke="#8b0000" stroke-width="1.5"/><circle cx="781.20" cy="613.50" r="2.3" fill="#fff" stroke="#8b0000" stroke-width="1.5"/><circle cx="789.50" cy="613.50" r="2.3" fill="#fff" stroke="#8b0000" stroke-width="1.5"/><circle cx="797.80" cy="613.50" r="2.3" fill="#fff" stroke="#8b0000" stroke-width="1.5"/><circle cx="806.10" cy="613.50" r="2.3" fill="#fff" stroke="#8b0000" stroke-width="1.5"/><circle cx="814.40" cy="613.50" r="2.3" fill="#fff" stroke="#8b0000" stroke-width="1.5"/><circle cx="822.70" cy="613.50" r="2.3" fill="#fff" stroke="#8b0000" stroke-width="1.5"/><circle cx="831.00" cy="613.50" r="2.3" fill="#fff" stroke="#8b0000" stroke-width="1.5"/><circle cx="839.30" cy="613.50" r="2.3" fill="#fff" stroke="#8b0000" stroke-width="1.5"/></svg><div class="a" style="left:136.5px;top:607.0px;width:77.5px;text-align:right;font-size:8.8px;line-height:13px;color:#545454;white-space:nowrap">0 s</div><div class="a" style="left:136.5px;top:584.7px;width:77.5px;text-align:right;font-size:8.8px;line-height:13px;color:#545454;white-space:nowrap">2 s</div><div class="a" style="left:136.5px;top:563.3px;width:77.5px;text-align:right;font-size:8.8px;line-height:13px;color:#545454;white-space:nowrap">4 s</div><div class="a" style="left:136.5px;top:541.9px;width:77.5px;text-align:right;font-size:8.8px;line-height:13px;color:#545454;white-space:nowrap">6 s</div><div class="a" style="left:136.5px;top:520.5px;width:77.5px;text-align:right;font-size:8.8px;line-height:13px;color:#545454;white-space:nowrap">8 s</div><div class="a" style="left:233.5px;top:618px;width:100px;text-align:center;font-size:8.8px;line-height:13px;color:#545454;white-space:nowrap">2022-01-28 09:02</div><div class="a" style="left:357.5px;top:618px;width:100px;text-align:center;font-size:8.8px;line-height:13px;color:#545454;white-space:nowrap">09:04</div><div class="a" style="left:481.79999999999995px;top:618px;width:100px;text-align:center;font-size:8.8px;line-height:13px;color:#545454;white-space:nowrap">09:06</div><div class="a" style="left:606.2px;top:618px;width:100px;text-align:center;font-size:8.8px;line-height:13px;color:#545454;white-space:nowrap">09:08</div><div class="a" style="left:730.7px;top:618px;width:100px;text-align:center;font-size:8.8px;line-height:13px;color:#545454;white-space:nowrap">09:10</div><div class="a" style="left:220.5px;top:530.5px;width:11px;height:11px;border:1px solid #ddd;border-radius:1.5px;background:#fff"></div><div class="a" style="left:222.8px;top:532.8px;width:6.2px;height:7.7px;background:#8b0000"></div><div class="a" style="left:232.0px;top:529.5px;font-size:8.8px;line-height:13px;color:#333;white-space:nowrap">Mittel</div><svg class="a" style="left:855px;top:520px" width="12" height="42" viewBox="0 0 12 42"><circle cx="4.8" cy="5.8" r="3.2" stroke="#111" stroke-width="1.3" fill="none"/><path d="M7 8 L9.8 10.8" stroke="#111" stroke-width="1.6" stroke-linecap="round"/><path d="M1.3 26.3 L3.6 24 M8.9 18.3 L6.6 20.6" stroke="#111" stroke-width="1.5" stroke-linecap="round"/><path d="M5 22.3 L2.2 22.3 L5 25.2Z M5.2 21.9 L5.2 19.1 L8 21.9Z" fill="#111"/><path d="M0.8 35 H8.6 L4.7 39.2Z" fill="#222"/></svg><div class="a" style="left:888.2px;top:490px;font-size:18px;line-height:27px;font-weight:400;-webkit-text-stroke:0.7px #333;letter-spacing:0.29px;white-space:nowrap">Client-Handshake-Zeit</div><svg class="a" style="left:0;top:0" width="1600" height="886" viewBox="0 0 1600 886"><line x1="929.9" y1="591.6" x2="1553" y2="591.6" stroke="#e6e6e6" stroke-width="1"/><line x1="929.9" y1="569.5" x2="1553" y2="569.5" stroke="#e6e6e6" stroke-width="1"/><line x1="929.9" y1="547.9" x2="1553" y2="547.9" stroke="#e6e6e6" stroke-width="1"/><line x1="929.9" y1="526.5" x2="1553" y2="526.5" stroke="#e6e6e6" stroke-width="1"/><line x1="996.9" y1="525.2" x2="996.9" y2="613.6" stroke="#e6e6e6" stroke-width="1"/><line x1="1120.9" y1="525.2" x2="1120.9" y2="613.6" stroke="#e6e6e6" stroke-width="1"/><line x1="1245.1999999999998" y1="525.2" x2="1245.1999999999998" y2="613.6" stroke="#e6e6e6" stroke-width="1"/><line x1="1369.6" y1="525.2" x2="1369.6" y2="613.6" stroke="#e6e6e6" stroke-width="1"/><line x1="1494.1" y1="525.2" x2="1494.1" y2="613.6" stroke="#e6e6e6" stroke-width="1"/><path d="M929.9 613.6 V525.2 H1553 V613.6" stroke="#555" stroke-width="1.6" fill="none"/><line x1="929.9" y1="614.6" x2="1553" y2="614.6" stroke="#333" stroke-width="1.2"/><line x1="955.10" y1="603.5" x2="955.10" y2="613.6" stroke="#8b0000" stroke-width="1.4"/><line x1="952.65" y1="603.5" x2="957.55" y2="603.5" stroke="#8b0000" stroke-width="1.6"/><line x1="971.71" y1="606.8" x2="971.71" y2="613.6" stroke="#8b0000" stroke-width="1.4"/><line x1="969.26" y1="606.8" x2="974.16" y2="606.8" stroke="#8b0000" stroke-width="1.6"/><line x1="988.31" y1="605.7" x2="988.31" y2="613.6" stroke="#8b0000" stroke-width="1.4"/><line x1="985.86" y1="605.7" x2="990.76" y2="605.7" stroke="#8b0000" stroke-width="1.6"/><line x1="996.61" y1="610" x2="996.61" y2="613.6" stroke="#8b0000" stroke-width="1.4"/><line x1="994.16" y1="610" x2="999.06" y2="610" stroke="#8b0000" stroke-width="1.6"/><line x1="1004.91" y1="610.5" x2="1004.91" y2="613.6" stroke="#8b0000" stroke-width="1.4"/><line x1="1002.46" y1="610.5" x2="1007.36" y2="610.5" stroke="#8b0000" stroke-width="1.6"/><line x1="1021.51" y1="601.2" x2="1021.51" y2="613.6" stroke="#8b0000" stroke-width="1.4"/><line x1="1019.06" y1="601.2" x2="1023.96" y2="601.2" stroke="#8b0000" stroke-width="1.6"/><line x1="1029.82" y1="610.5" x2="1029.82" y2="613.6" stroke="#8b0000" stroke-width="1.4"/><line x1="1027.37" y1="610.5" x2="1032.27" y2="610.5" stroke="#8b0000" stroke-width="1.6"/><line x1="1038.12" y1="608.6" x2="1038.12" y2="613.6" stroke="#8b0000" stroke-width="1.4"/><line x1="1035.67" y1="608.6" x2="1040.57" y2="608.6" stroke="#8b0000" stroke-width="1.6"/><line x1="1046.42" y1="590" x2="1046.42" y2="613.6" stroke="#8b0000" stroke-width="1.4"/><line x1="1043.97" y1="590" x2="1048.87" y2="590" stroke="#8b0000" stroke-width="1.6"/><line x1="1054.72" y1="597.8" x2="1054.72" y2="613.6" stroke="#8b0000" stroke-width="1.4"/><line x1="1052.27" y1="597.8" x2="1057.17" y2="597.8" stroke="#8b0000" stroke-width="1.6"/><line x1="1063.02" y1="609.5" x2="1063.02" y2="613.6" stroke="#8b0000" stroke-width="1.4"/><line x1="1060.57" y1="609.5" x2="1065.47" y2="609.5" stroke="#8b0000" stroke-width="1.6"/><line x1="1087.93" y1="601.2" x2="1087.93" y2="613.6" stroke="#8b0000" stroke-width="1.4"/><line x1="1085.48" y1="601.2" x2="1090.38" y2="601.2" stroke="#8b0000" stroke-width="1.6"/><line x1="1104.53" y1="608.4" x2="1104.53" y2="613.6" stroke="#8b0000" stroke-width="1.4"/><line x1="1102.08" y1="608.4" x2="1106.98" y2="608.4" stroke="#8b0000" stroke-width="1.6"/><line x1="1112.83" y1="543.8" x2="1112.83" y2="610.6" stroke="#8b0000" stroke-width="1.4"/><line x1="1110.38" y1="543.8" x2="1115.28" y2="543.8" stroke="#8b0000" stroke-width="1.6"/><line x1="1121.13" y1="600" x2="1121.13" y2="613.6" stroke="#8b0000" stroke-width="1.4"/><line x1="1118.68" y1="600" x2="1123.58" y2="600" stroke="#8b0000" stroke-width="1.6"/><line x1="1129.43" y1="589.3" x2="1129.43" y2="613.6" stroke="#8b0000" stroke-width="1.4"/><line x1="1126.98" y1="589.3" x2="1131.88" y2="589.3" stroke="#8b0000" stroke-width="1.6"/><line x1="1137.73" y1="610.5" x2="1137.73" y2="613.6" stroke="#8b0000" stroke-width="1.4"/><line x1="1135.28" y1="610.5" x2="1140.18" y2="610.5" stroke="#8b0000" stroke-width="1.6"/><line x1="1146.03" y1="598.3" x2="1146.03" y2="613.6" stroke="#8b0000" stroke-width="1.4"/><line x1="1143.58" y1="598.3" x2="1148.48" y2="598.3" stroke="#8b0000" stroke-width="1.6"/><line x1="1170.94" y1="610.5" x2="1170.94" y2="613.6" stroke="#8b0000" stroke-width="1.4"/><line x1="1168.49" y1="610.5" x2="1173.39" y2="610.5" stroke="#8b0000" stroke-width="1.6"/><line x1="1179.24" y1="602.3" x2="1179.24" y2="613.6" stroke="#8b0000" stroke-width="1.4"/><line x1="1176.79" y1="602.3" x2="1181.69" y2="602.3" stroke="#8b0000" stroke-width="1.6"/><line x1="1187.54" y1="600.5" x2="1187.54" y2="613.6" stroke="#8b0000" stroke-width="1.4"/><line x1="1185.09" y1="600.5" x2="1189.99" y2="600.5" stroke="#8b0000" stroke-width="1.6"/><line x1="1195.84" y1="596.3" x2="1195.84" y2="613.6" stroke="#8b0000" stroke-width="1.4"/><line x1="1193.39" y1="596.3" x2="1198.29" y2="596.3" stroke="#8b0000" stroke-width="1.6"/><line x1="1212.45" y1="600" x2="1212.45" y2="613.6" stroke="#8b0000" stroke-width="1.4"/><line x1="1210.00" y1="600" x2="1214.90" y2="600" stroke="#8b0000" stroke-width="1.6"/><line x1="1220.75" y1="606" x2="1220.75" y2="613.6" stroke="#8b0000" stroke-width="1.4"/><line x1="1218.30" y1="606" x2="1223.20" y2="606" stroke="#8b0000" stroke-width="1.6"/><line x1="1229.05" y1="610.5" x2="1229.05" y2="613.6" stroke="#8b0000" stroke-width="1.4"/><line x1="1226.60" y1="610.5" x2="1231.50" y2="610.5" stroke="#8b0000" stroke-width="1.6"/><line x1="1245.65" y1="610.5" x2="1245.65" y2="613.6" stroke="#8b0000" stroke-width="1.4"/><line x1="1243.20" y1="610.5" x2="1248.10" y2="610.5" stroke="#8b0000" stroke-width="1.6"/><line x1="1253.95" y1="550.5" x2="1253.95" y2="612.1" stroke="#8b0000" stroke-width="1.4"/><line x1="1251.50" y1="550.5" x2="1256.40" y2="550.5" stroke="#8b0000" stroke-width="1.6"/><line x1="1278.86" y1="610.5" x2="1278.86" y2="613.6" stroke="#8b0000" stroke-width="1.4"/><line x1="1276.41" y1="610.5" x2="1281.31" y2="610.5" stroke="#8b0000" stroke-width="1.6"/><line x1="1287.16" y1="609" x2="1287.16" y2="613.6" stroke="#8b0000" stroke-width="1.4"/><line x1="1284.71" y1="609" x2="1289.61" y2="609" stroke="#8b0000" stroke-width="1.6"/><line x1="1295.46" y1="571.3" x2="1295.46" y2="611.1" stroke="#8b0000" stroke-width="1.4"/><line x1="1293.01" y1="571.3" x2="1297.91" y2="571.3" stroke="#8b0000" stroke-width="1.6"/><line x1="1336.97" y1="593.3" x2="1336.97" y2="613.6" stroke="#8b0000" stroke-width="1.4"/><line x1="1334.52" y1="593.3" x2="1339.42" y2="593.3" stroke="#8b0000" stroke-width="1.6"/><line x1="1345.27" y1="608.6" x2="1345.27" y2="613.6" stroke="#8b0000" stroke-width="1.4"/><line x1="1342.82" y1="608.6" x2="1347.72" y2="608.6" stroke="#8b0000" stroke-width="1.6"/><line x1="1353.57" y1="610.5" x2="1353.57" y2="613.6" stroke="#8b0000" stroke-width="1.4"/><line x1="1351.12" y1="610.5" x2="1356.02" y2="610.5" stroke="#8b0000" stroke-width="1.6"/><line x1="1370.17" y1="560.7" x2="1370.17" y2="608.6" stroke="#8b0000" stroke-width="1.4"/><line x1="1367.72" y1="560.7" x2="1372.62" y2="560.7" stroke="#8b0000" stroke-width="1.6"/><line x1="1411.68" y1="610.5" x2="1411.68" y2="613.6" stroke="#8b0000" stroke-width="1.4"/><line x1="1409.23" y1="610.5" x2="1414.13" y2="610.5" stroke="#8b0000" stroke-width="1.6"/><line x1="1428.28" y1="602.3" x2="1428.28" y2="613.6" stroke="#8b0000" stroke-width="1.4"/><line x1="1425.83" y1="602.3" x2="1430.73" y2="602.3" stroke="#8b0000" stroke-width="1.6"/><line x1="1436.58" y1="564" x2="1436.58" y2="613.6" stroke="#8b0000" stroke-width="1.4"/><line x1="1434.13" y1="564" x2="1439.03" y2="564" stroke="#8b0000" stroke-width="1.6"/><line x1="1453.18" y1="606.2" x2="1453.18" y2="613.6" stroke="#8b0000" stroke-width="1.4"/><line x1="1450.73" y1="606.2" x2="1455.63" y2="606.2" stroke="#8b0000" stroke-width="1.6"/><line x1="1469.79" y1="610.5" x2="1469.79" y2="613.6" stroke="#8b0000" stroke-width="1.4"/><line x1="1467.34" y1="610.5" x2="1472.24" y2="610.5" stroke="#8b0000" stroke-width="1.6"/><line x1="1478.09" y1="610.5" x2="1478.09" y2="613.6" stroke="#8b0000" stroke-width="1.4"/><line x1="1475.64" y1="610.5" x2="1480.54" y2="610.5" stroke="#8b0000" stroke-width="1.6"/><line x1="1486.39" y1="592.7" x2="1486.39" y2="613.6" stroke="#8b0000" stroke-width="1.4"/><line x1="1483.94" y1="592.7" x2="1488.84" y2="592.7" stroke="#8b0000" stroke-width="1.6"/><line x1="1494.69" y1="600.8" x2="1494.69" y2="612.1" stroke="#8b0000" stroke-width="1.4"/><line x1="1492.24" y1="600.8" x2="1497.14" y2="600.8" stroke="#8b0000" stroke-width="1.6"/><line x1="1502.99" y1="597.2" x2="1502.99" y2="613.6" stroke="#8b0000" stroke-width="1.4"/><line x1="1500.54" y1="597.2" x2="1505.44" y2="597.2" stroke="#8b0000" stroke-width="1.6"/><line x1="1511.29" y1="592.2" x2="1511.29" y2="611.1" stroke="#8b0000" stroke-width="1.4"/><line x1="1508.84" y1="592.2" x2="1513.74" y2="592.2" stroke="#8b0000" stroke-width="1.6"/><line x1="1527.90" y1="592.9" x2="1527.90" y2="613.6" stroke="#8b0000" stroke-width="1.4"/><line x1="1525.45" y1="592.9" x2="1530.35" y2="592.9" stroke="#8b0000" stroke-width="1.6"/><line x1="1536.20" y1="593.3" x2="1536.20" y2="613.6" stroke="#8b0000" stroke-width="1.4"/><line x1="1533.75" y1="593.3" x2="1538.65" y2="593.3" stroke="#8b0000" stroke-width="1.6"/><line x1="1544.50" y1="608" x2="1544.50" y2="613.6" stroke="#8b0000" stroke-width="1.4"/><line x1="1542.05" y1="608" x2="1546.95" y2="608" stroke="#8b0000" stroke-width="1.6"/><circle cx="930.20" cy="613.60" r="2.3" fill="#fff" stroke="#8b0000" stroke-width="1.5"/><circle cx="938.50" cy="613.60" r="2.3" fill="#fff" stroke="#8b0000" stroke-width="1.5"/><circle cx="946.80" cy="613.60" r="2.3" fill="#fff" stroke="#8b0000" stroke-width="1.5"/><circle cx="955.10" cy="613.60" r="2.3" fill="#fff" stroke="#8b0000" stroke-width="1.5"/><circle cx="963.41" cy="613.60" r="2.3" fill="#fff" stroke="#8b0000" stroke-width="1.5"/><circle cx="971.71" cy="613.60" r="2.3" fill="#fff" stroke="#8b0000" stroke-width="1.5"/><circle cx="980.01" cy="613.60" r="2.3" fill="#fff" stroke="#8b0000" stroke-width="1.5"/><circle cx="988.31" cy="613.60" r="2.3" fill="#fff" stroke="#8b0000" stroke-width="1.5"/><circle cx="996.61" cy="613.60" r="2.3" fill="#fff" stroke="#8b0000" stroke-width="1.5"/><circle cx="1004.91" cy="613.60" r="2.3" fill="#fff" stroke="#8b0000" stroke-width="1.5"/><circle cx="1013.21" cy="613.60" r="2.3" fill="#fff" stroke="#8b0000" stroke-width="1.5"/><circle cx="1021.51" cy="613.60" r="2.3" fill="#fff" stroke="#8b0000" stroke-width="1.5"/><circle cx="1029.82" cy="613.60" r="2.3" fill="#fff" stroke="#8b0000" stroke-width="1.5"/><circle cx="1038.12" cy="613.60" r="2.3" fill="#fff" stroke="#8b0000" stroke-width="1.5"/><circle cx="1046.42" cy="613.60" r="2.3" fill="#fff" stroke="#8b0000" stroke-width="1.5"/><circle cx="1054.72" cy="613.60" r="2.3" fill="#fff" stroke="#8b0000" stroke-width="1.5"/><circle cx="1063.02" cy="613.60" r="2.3" fill="#fff" stroke="#8b0000" stroke-width="1.5"/><circle cx="1071.32" cy="613.60" r="2.3" fill="#fff" stroke="#8b0000" stroke-width="1.5"/><circle cx="1079.62" cy="613.60" r="2.3" fill="#fff" stroke="#8b0000" stroke-width="1.5"/><circle cx="1087.93" cy="613.60" r="2.3" fill="#fff" stroke="#8b0000" stroke-width="1.5"/><circle cx="1096.23" cy="613.60" r="2.3" fill="#fff" stroke="#8b0000" stroke-width="1.5"/><circle cx="1104.53" cy="613.60" r="2.3" fill="#fff" stroke="#8b0000" stroke-width="1.5"/><circle cx="1112.83" cy="610.60" r="2.3" fill="#fff" stroke="#8b0000" stroke-width="1.5"/><circle cx="1121.13" cy="613.60" r="2.3" fill="#fff" stroke="#8b0000" stroke-width="1.5"/><circle cx="1129.43" cy="613.60" r="2.3" fill="#fff" stroke="#8b0000" stroke-width="1.5"/><circle cx="1137.73" cy="613.60" r="2.3" fill="#fff" stroke="#8b0000" stroke-width="1.5"/><circle cx="1146.03" cy="613.60" r="2.3" fill="#fff" stroke="#8b0000" stroke-width="1.5"/><circle cx="1154.34" cy="613.60" r="2.3" fill="#fff" stroke="#8b0000" stroke-width="1.5"/><circle cx="1162.64" cy="613.60" r="2.3" fill="#fff" stroke="#8b0000" stroke-width="1.5"/><circle cx="1170.94" cy="613.60" r="2.3" fill="#fff" stroke="#8b0000" stroke-width="1.5"/><circle cx="1179.24" cy="613.60" r="2.3" fill="#fff" stroke="#8b0000" stroke-width="1.5"/><circle cx="1187.54" cy="613.60" r="2.3" fill="#fff" stroke="#8b0000" stroke-width="1.5"/><circle cx="1195.84" cy="613.60" r="2.3" fill="#fff" stroke="#8b0000" stroke-width="1.5"/><circle cx="1204.14" cy="613.60" r="2.3" fill="#fff" stroke="#8b0000" stroke-width="1.5"/><circle cx="1212.45" cy="613.60" r="2.3" fill="#fff" stroke="#8b0000" stroke-width="1.5"/><circle cx="1220.75" cy="613.60" r="2.3" fill="#fff" stroke="#8b0000" stroke-width="1.5"/><circle cx="1229.05" cy="613.60" r="2.3" fill="#fff" stroke="#8b0000" stroke-width="1.5"/><circle cx="1237.35" cy="613.60" r="2.3" fill="#fff" stroke="#8b0000" stroke-width="1.5"/><circle cx="1245.65" cy="613.60" r="2.3" fill="#fff" stroke="#8b0000" stroke-width="1.5"/><circle cx="1253.95" cy="612.10" r="2.3" fill="#fff" stroke="#8b0000" stroke-width="1.5"/><circle cx="1262.25" cy="613.60" r="2.3" fill="#fff" stroke="#8b0000" stroke-width="1.5"/><circle cx="1270.55" cy="613.60" r="2.3" fill="#fff" stroke="#8b0000" stroke-width="1.5"/><circle cx="1278.86" cy="613.60" r="2.3" fill="#fff" stroke="#8b0000" stroke-width="1.5"/><circle cx="1287.16" cy="613.60" r="2.3" fill="#fff" stroke="#8b0000" stroke-width="1.5"/><circle cx="1295.46" cy="611.10" r="2.3" fill="#fff" stroke="#8b0000" stroke-width="1.5"/><circle cx="1303.76" cy="613.60" r="2.3" fill="#fff" stroke="#8b0000" stroke-width="1.5"/><circle cx="1312.06" cy="613.60" r="2.3" fill="#fff" stroke="#8b0000" stroke-width="1.5"/><circle cx="1320.36" cy="613.60" r="2.3" fill="#fff" stroke="#8b0000" stroke-width="1.5"/><circle cx="1328.66" cy="613.60" r="2.3" fill="#fff" stroke="#8b0000" stroke-width="1.5"/><circle cx="1336.97" cy="613.60" r="2.3" fill="#fff" stroke="#8b0000" stroke-width="1.5"/><circle cx="1345.27" cy="613.60" r="2.3" fill="#fff" stroke="#8b0000" stroke-width="1.5"/><circle cx="1353.57" cy="613.60" r="2.3" fill="#fff" stroke="#8b0000" stroke-width="1.5"/><circle cx="1361.87" cy="613.60" r="2.3" fill="#fff" stroke="#8b0000" stroke-width="1.5"/><circle cx="1370.17" cy="608.60" r="2.3" fill="#fff" stroke="#8b0000" stroke-width="1.5"/><circle cx="1378.47" cy="613.60" r="2.3" fill="#fff" stroke="#8b0000" stroke-width="1.5"/><circle cx="1386.77" cy="613.60" r="2.3" fill="#fff" stroke="#8b0000" stroke-width="1.5"/><circle cx="1395.07" cy="613.60" r="2.3" fill="#fff" stroke="#8b0000" stroke-width="1.5"/><circle cx="1403.38" cy="613.60" r="2.3" fill="#fff" stroke="#8b0000" stroke-width="1.5"/><circle cx="1411.68" cy="613.60" r="2.3" fill="#fff" stroke="#8b0000" stroke-width="1.5"/><circle cx="1419.98" cy="613.60" r="2.3" fill="#fff" stroke="#8b0000" stroke-width="1.5"/><circle cx="1428.28" cy="613.60" r="2.3" fill="#fff" stroke="#8b0000" stroke-width="1.5"/><circle cx="1436.58" cy="613.60" r="2.3" fill="#fff" stroke="#8b0000" stroke-width="1.5"/><circle cx="1444.88" cy="613.60" r="2.3" fill="#fff" stroke="#8b0000" stroke-width="1.5"/><circle cx="1453.18" cy="613.60" r="2.3" fill="#fff" stroke="#8b0000" stroke-width="1.5"/><circle cx="1461.49" cy="613.60" r="2.3" fill="#fff" stroke="#8b0000" stroke-width="1.5"/><circle cx="1469.79" cy="613.60" r="2.3" fill="#fff" stroke="#8b0000" stroke-width="1.5"/><circle cx="1478.09" cy="613.60" r="2.3" fill="#fff" stroke="#8b0000" stroke-width="1.5"/><circle cx="1486.39" cy="613.60" r="2.3" fill="#fff" stroke="#8b0000" stroke-width="1.5"/><circle cx="1494.69" cy="612.10" r="2.3" fill="#fff" stroke="#8b0000" stroke-width="1.5"/><circle cx="1502.99" cy="613.60" r="2.3" fill="#fff" stroke="#8b0000" stroke-width="1.5"/><circle cx="1511.29" cy="611.10" r="2.3" fill="#fff" stroke="#8b0000" stroke-width="1.5"/><circle cx="1519.59" cy="613.60" r="2.3" fill="#fff" stroke="#8b0000" stroke-width="1.5"/><circle cx="1527.90" cy="613.60" r="2.3" fill="#fff" stroke="#8b0000" stroke-width="1.5"/><circle cx="1536.20" cy="613.60" r="2.3" fill="#fff" stroke="#8b0000" stroke-width="1.5"/><circle cx="1544.50" cy="613.60" r="2.3" fill="#fff" stroke="#8b0000" stroke-width="1.5"/><circle cx="1552.80" cy="613.60" r="2.3" fill="#fff" stroke="#8b0000" stroke-width="1.5"/></svg><div class="a" style="left:849.9px;top:607.1px;width:77.5px;text-align:right;font-size:8.8px;line-height:13px;color:#545454;white-space:nowrap">0 ms</div><div class="a" style="left:849.9px;top:585.1px;width:77.5px;text-align:right;font-size:8.8px;line-height:13px;color:#545454;white-space:nowrap">100 ms</div><div class="a" style="left:849.9px;top:563.0px;width:77.5px;text-align:right;font-size:8.8px;line-height:13px;color:#545454;white-space:nowrap">200 ms</div><div class="a" style="left:849.9px;top:541.4px;width:77.5px;text-align:right;font-size:8.8px;line-height:13px;color:#545454;white-space:nowrap">300 ms</div><div class="a" style="left:849.9px;top:520.0px;width:77.5px;text-align:right;font-size:8.8px;line-height:13px;color:#545454;white-space:nowrap">400 ms</div><div class="a" style="left:946.9px;top:618px;width:100px;text-align:center;font-size:8.8px;line-height:13px;color:#545454;white-space:nowrap">2022-01-28 09:02</div><div class="a" style="left:1070.9px;top:618px;width:100px;text-align:center;font-size:8.8px;line-height:13px;color:#545454;white-space:nowrap">09:04</div><div class="a" style="left:1195.1999999999998px;top:618px;width:100px;text-align:center;font-size:8.8px;line-height:13px;color:#545454;white-space:nowrap">09:06</div><div class="a" style="left:1319.6px;top:618px;width:100px;text-align:center;font-size:8.8px;line-height:13px;color:#545454;white-space:nowrap">09:08</div><div class="a" style="left:1444.1px;top:618px;width:100px;text-align:center;font-size:8.8px;line-height:13px;color:#545454;white-space:nowrap">09:10</div><div class="a" style="left:935.1px;top:530.5px;width:11px;height:11px;border:1px solid #ddd;border-radius:1.5px;background:#fff"></div><div class="a" style="left:937.4px;top:532.8px;width:6.2px;height:7.7px;background:#8b0000"></div><div class="a" style="left:939.7px;top:536.2px;width:1.8px;height:1px;background:#fff"></div><div class="a" style="left:946.6px;top:529.5px;font-size:8.8px;line-height:13px;color:#333;white-space:nowrap">Mittel</div><svg class="a" style="left:1569px;top:520px" width="12" height="42" viewBox="0 0 12 42"><circle cx="4.8" cy="5.8" r="3.2" stroke="#111" stroke-width="1.3" fill="none"/><path d="M7 8 L9.8 10.8" stroke="#111" stroke-width="1.6" stroke-linecap="round"/><path d="M1.3 26.3 L3.6 24 M8.9 18.3 L6.6 20.6" stroke="#111" stroke-width="1.5" stroke-linecap="round"/><path d="M5 22.3 L2.2 22.3 L5 25.2Z M5.2 21.9 L5.2 19.1 L8 21.9Z" fill="#111"/><path d="M0.8 35 H8.6 L4.7 39.2Z" fill="#222"/></svg><div class="a btn" style="left:686px;top:631.6px;width:292.5px;height:27px;border-color:#ddd"></div><div class="a" style="left:711.2px;top:631.6px;width:1px;height:27px;background:#ddd"></div><div class="a" style="left:781px;top:631.6px;width:1px;height:27px;background:#ddd"></div><div class="a" style="left:879px;top:631.6px;width:1px;height:27px;background:#ddd"></div><div class="a" style="left:953.6px;top:631.6px;width:1px;height:27px;background:#ddd"></div><div class="a" style="left:696.3px;top:638.5px;font-size:8.5px;font-weight:700;color:#337ab7">«</div><div class="a" style="left:720.5px;top:638px;white-space:nowrap;color:#337ab7">Erste Seite</div><div class="a" style="left:791px;top:636.5px;width:38px;height:16px;border:1px solid #ccc;border-radius:2.5px;background:#fff"></div><div class="a" style="left:791px;top:638px;width:38px;text-align:center;color:#337ab7">1</div><div class="a" style="left:832px;top:638px;white-space:nowrap;color:#337ab7">von 345</div><div class="a" style="left:888.5px;top:638px;white-space:nowrap;color:#337ab7">Letzte Seite</div><div class="a" style="left:963px;top:638.5px;font-size:8.5px;font-weight:700;color:#337ab7">»</div><div class="a btn" style="left:1491.5px;top:632px;width:88px;height:26.5px"></div><div class="a" style="left:1492.5px;top:633px;width:25px;height:24.5px;background:#e6e6e6;box-shadow:inset 0 2px 4px rgba(0,0,0,.125);border-radius:2px 0 0 2px"></div><div class="a" style="left:1517px;top:632px;width:1px;height:26.5px;background:#adadad"></div><div class="a" style="left:1548px;top:632px;width:1px;height:26.5px;background:#ccc"></div><div class="a" style="left:1500.5px;top:638px">5</div><div class="a" style="left:1526.5px;top:638px">10</div><div class="a" style="left:1557.5px;top:638px">20</div><div class="a" style="left:180px;top:698.5px;font-weight:700;white-space:nowrap">IP<svg style="display:inline-block;margin-left:4.2px;vertical-align:0px" width="6" height="7.5" viewBox="0 0 6 7.5"><path d="M0.2 2.6 Q3 -0.9 5.8 2.6Z M0.2 4.6 Q3 8.4 5.8 4.6Z" fill="#aaa"/></svg></div><div class="a" style="left:320.7px;top:698.5px;font-weight:700;white-space:nowrap">Anzahl an Handshakes<svg style="display:inline-block;margin-left:4.2px;vertical-align:0px" width="6" height="7.5" viewBox="0 0 6 7.5"><path d="M0.2 2.6 Q3 -0.9 5.8 2.6Z M0.2 4.6 Q3 8.4 5.8 4.6Z" fill="#aaa"/></svg></div><div class="a" style="left:461.2px;top:683.5px;font-weight:700;white-space:nowrap">Mittlere Handshake-<br>Roundtrip-Zeit<svg style="display:inline-block;margin-left:4.2px;vertical-align:0px" width="6" height="7.5" viewBox="0 0 6 7.5"><path d="M0.2 2.6 Q3 -0.9 5.8 2.6Z M0.2 4.6 Q3 8.4 5.8 4.6Z" fill="#aaa"/></svg></div><div class="a" style="left:601.8px;top:698.5px;font-weight:700;white-space:nowrap">Abweichung<svg style="display:inline-block;margin-left:4.2px;vertical-align:0px" width="6" height="7.5" viewBox="0 0 6 7.5"><path d="M0.2 2.6 Q3 -0.9 5.8 2.6Z M0.2 4.6 Q3 8.4 5.8 4.6Z" fill="#aaa"/></svg></div><div class="a" style="left:742.3px;top:683.5px;font-weight:700;white-space:nowrap">Minimale Handshake-<br>Roundtrip-Zeit<svg style="display:inline-block;margin-left:4.2px;vertical-align:0px" width="6" height="7.5" viewBox="0 0 6 7.5"><path d="M0.2 2.6 Q3 -0.9 5.8 2.6Z M0.2 4.6 Q3 8.4 5.8 4.6Z" fill="#aaa"/></svg></div><div class="a" style="left:883px;top:683.5px;font-weight:700;white-space:nowrap">Maximale Handshake-<br>Roundtrip-Zeit<svg style="display:inline-block;margin-left:4.2px;vertical-align:0px" width="6" height="7.5" viewBox="0 0 6 7.5"><path d="M0.2 2.6 Q3 -0.9 5.8 2.6Z M0.2 4.6 Q3 8.4 5.8 4.6Z" fill="#aaa"/></svg></div><div class="a" style="left:1023.5px;top:698.5px;font-weight:700;white-space:nowrap">Bewertung<svg style="display:inline-block;margin-left:4.2px;vertical-align:0px" width="6" height="7.5" viewBox="0 0 6 7.5"><path d="M0.2 2.6 Q3 -0.9 5.8 2.6Z M0.2 4.6 Q3 8.4 5.8 4.6Z" fill="#aaa"/></svg></div><div class="a" style="left:1164px;top:698.5px;font-weight:700;white-space:nowrap">Alternative Namen</div><div class="a" style="left:174px;top:719.5px;width:1406px;height:1.5px;background:#ddd"></div><div class="a" style="left:308.5px;top:727px;width:1152.5px;height:21.5px;border:1px solid #ccc;border-radius:2.5px;background:#fff"></div><div class="a" style="left:316.5px;top:731.5px;font-size:9px;line-height:12px;font-weight:700;color:#999;white-space:nowrap">Nach IP, Subnetz (z.B. 10/8 oder ff02::/32) oder Namen suchen, komplexe Filter beginnen mit '('</div><div class="a" style="left:174px;top:759px;width:1406px;height:1px;background:#ddd"></div><div class="a" style="left:174px;top:835px;width:1406px;height:1px;background:#ddd"></div><div class="a" style="left:180px;top:766px"><a>52.242.101.226</a><br><a>United States</a></div><div class="a" style="left:320.7px;top:766px;white-space:nowrap">Als Server: <b>1</b></div><div class="a" style="left:461.2px;top:766px;font-weight:700;white-space:nowrap">102.609 ms</div><div class="a" style="left:742.3px;top:766px;font-weight:700;white-space:nowrap">102.609 ms</div><div class="a" style="left:883px;top:766px;font-weight:700;white-space:nowrap">102.609 ms</div><div class="a" style="left:601.8px;top:766px;font-weight:700">0 ms</div><div class="a" style="left:1023.5px;top:766px;font-weight:700">NORMAL (3)</div><div class="a" style="left:1164px;top:766px;white-space:nowrap"><b style="">glb.sls.prod.dcat.dsp.trafficmanager.net</b> (DNS-Name)</div><div class="a" style="left:1164px;top:781.3px;white-space:nowrap"><b style="color:#337ab7;">slscr.update.microsoft.com</b> (SSL-Requested-Server-Name)</div><div class="a" style="left:1164px;top:796.5999999999999px;white-space:nowrap"><b style="color:#337ab7;">slscr.update.microsoft.com</b> (SSL-Common-Name)</div><div class="a btn" style="left:1164px;top:811.3999999999999px;width:69.5px;height:17.5px;line-height:15px;padding-left:2.6px;padding-top:1px;border-radius:2.5px">DNS-Resolve</div><div class="a" style="left:180px;top:842.5px"><a>54.174.152.186</a><br><a>United States</a></div><div class="a" style="left:320.7px;top:842.5px;white-space:nowrap">Als Server: <b>1</b></div><div class="a" style="left:461.2px;top:842.5px;font-weight:700;white-space:nowrap">113.656 ms</div><div class="a" style="left:742.3px;top:842.5px;font-weight:700;white-space:nowrap">113.656 ms</div><div class="a" style="left:883px;top:842.5px;font-weight:700;white-space:nowrap">113.656 ms</div><div class="a" style="left:601.8px;top:842.5px;font-weight:700">0 ms</div><div class="a" style="left:1023.5px;top:842.5px;font-weight:700">NORMAL (3)</div><div class="a" style="left:1164px;top:842.5px;white-space:nowrap"><b style="">f-log-win-extension.grammarly.io</b> (DNS-Name)</div><div class="a" style="left:1164px;top:857.8px;white-space:nowrap"><b style="color:#337ab7;">f-log.grammarly.io</b> (SSL-Common-Name)</div><div class="a btn" style="left:1164px;top:872.5999999999999px;width:69.5px;height:17.5px;line-height:15px;padding-left:2.6px;padding-top:1px;border-radius:2.5px">DNS-Resolve</div></body></html>
